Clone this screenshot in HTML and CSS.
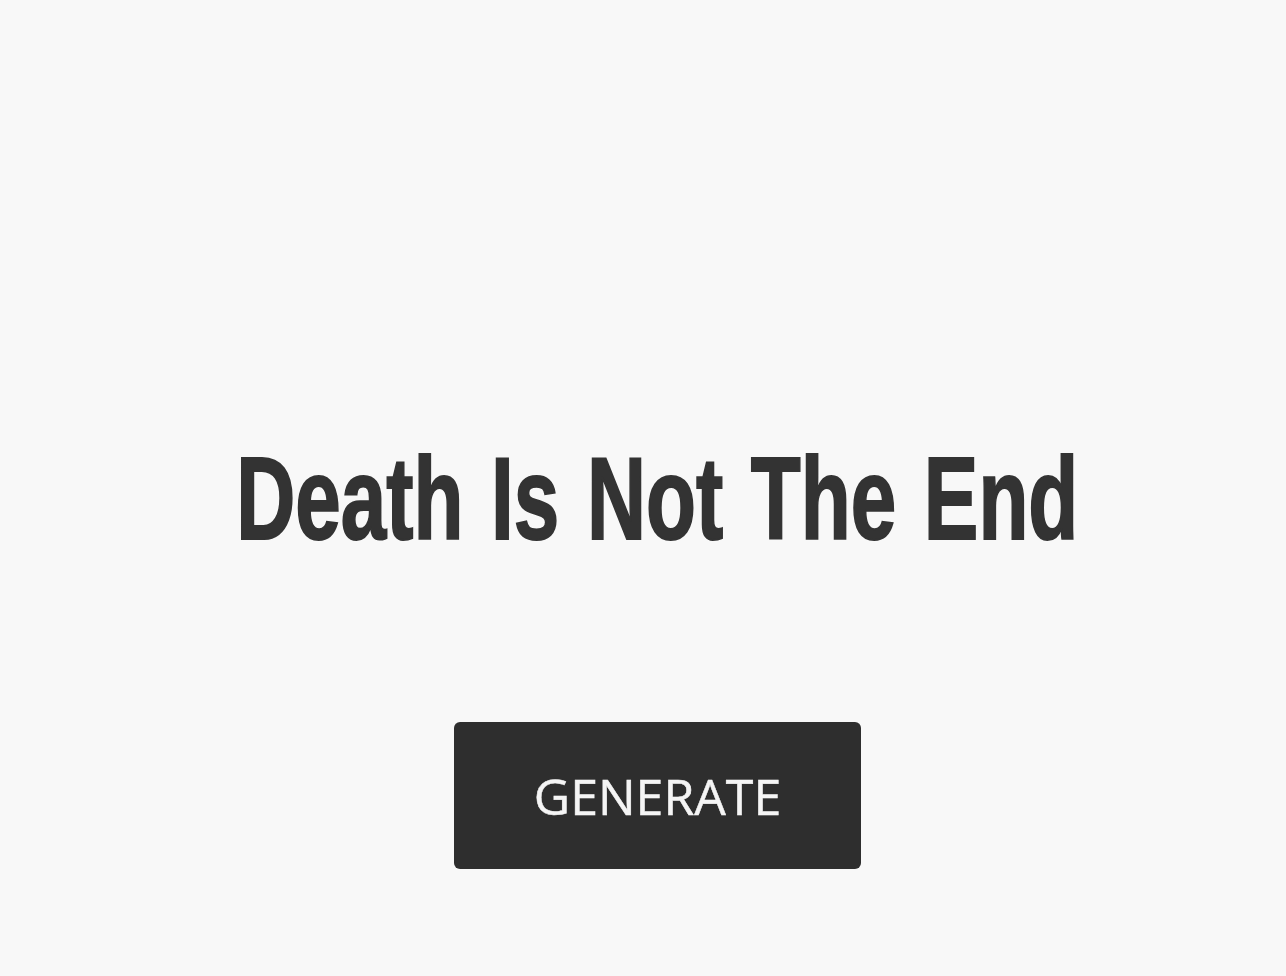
FILE: index.html
```html
<!DOCTYPE html>
<html lang="en">
<head>
<meta charset="utf-8">
<title>Death Is Not The End</title>
<link rel="stylesheet" href="styles.css">
</head>
<body>
<main class="page">
  <h1 class="title"><span class="title-text">Death Is Not The End</span></h1>
  <button class="generate" type="button">GENERATE</button>
</main>
</body>
</html>
```
FILE: styles.css
```css
html, body {
  margin: 0;
  padding: 0;
  background: #f8f8f8;
}
.page {
  min-height: 976px;
  box-sizing: border-box;
  padding-top: 441px;
  padding-left: 29px;
  display: flex;
  flex-direction: column;
  align-items: center;
}
.title {
  margin: 0;
  font-family: "Liberation Sans", "DejaVu Sans Condensed", sans-serif;
  font-weight: 700;
  font-size: 116px;
  line-height: 116px;
  color: #333333;
  white-space: nowrap;
}
.title-text {
  display: inline-block;
  transform: scaleX(0.705);
  word-spacing: 7px;
  -webkit-text-stroke: 2px #333333;
}
.generate {
  margin-top: 165px;
  width: 407px;
  height: 147px;
  border: none;
  border-radius: 6px;
  background: #2e2e2e;
  color: #f5f5f5;
  font-family: "Open Sans", sans-serif;
  font-size: 50px;
  font-weight: 500;
  -webkit-text-stroke: 0.5px #f5f5f5;
  display: flex;
  align-items: center;
  justify-content: center;
  padding: 0;
}
```
